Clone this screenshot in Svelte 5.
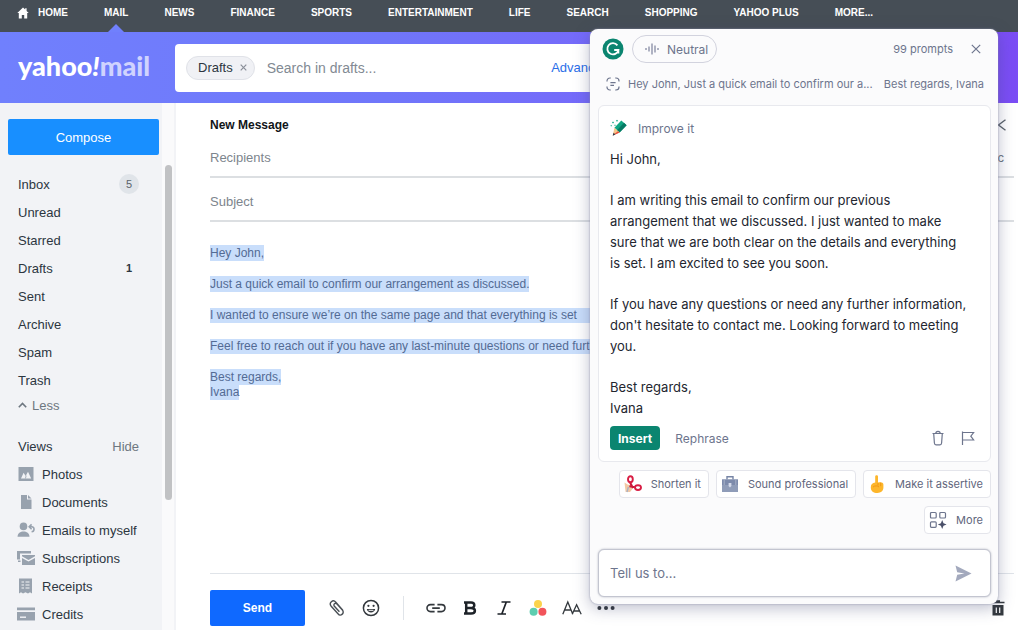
<script lang="ts">
  type Folder = { name: string; count?: number; badge?: boolean };

  const sections = ['NEWS', 'FINANCE', 'SPORTS', 'ENTERTAINMENT', 'LIFE', 'SEARCH', 'SHOPPING', 'YAHOO PLUS', 'MORE...'];

  const folders: Folder[] = [
    { name: 'Inbox', count: 5, badge: true },
    { name: 'Unread' },
    { name: 'Starred' },
    { name: 'Drafts', count: 1 },
    { name: 'Sent' },
    { name: 'Archive' },
    { name: 'Spam' },
    { name: 'Trash' }
  ];

  const views = ['Photos', 'Documents', 'Emails to myself', 'Subscriptions', 'Receipts', 'Credits'];

  let search = $state('');
  let recipients = $state('');
  let subject = $state('');
  let prompt = $state('');
</script>

<div class="app">
  <nav class="topnav">
    <a class="home" href="#home">
      <svg width="12" height="12" viewBox="0 0 12 12"><path d="M6 0.5 L0.3 6 H1.8 V11.5 H4.8 V8 H7.2 V11.5 H10.2 V6 H11.7 L9.6 4 V1.2 H8.2 V2.6 Z" fill="#fff" /></svg>
      HOME
    </a>
    <a class="current" href="#mail">MAIL</a>
    {#each sections as section}
      <a href="#{section}">{section}</a>
    {/each}
  </nav>

  <header class="header">
    <a class="logo" href="#mail">yahoo<i>!</i><span>mail</span></a>
    <div class="search">
      <button class="tag">Drafts
        <svg width="7" height="7" viewBox="0 0 7 7"><path d="M0.7 0.7 L6.3 6.3 M6.3 0.7 L0.7 6.3" stroke="#8a8f99" stroke-width="1.2" /></svg>
      </button>
      <input type="text" placeholder="Search in drafts..." aria-label="Search in drafts" bind:value={search} />
      <a href="#advanced">Advanced</a>
    </div>
  </header>

  <div class="content">
    <aside class="sidebar">
      <div class="side-list">
        <button class="compose-btn">Compose</button>
        <ul class="folders">
          {#each folders as folder}
            <li>
              <a href="#{folder.name}">{folder.name}</a>
              {#if folder.count}
                <span class="count" class:badge={folder.badge}>{folder.count}</span>
              {/if}
            </li>
          {/each}
        </ul>
        <button class="less">
          <svg width="9" height="6" viewBox="0 0 9 6"><path d="M0.8 5.2 L4.5 1.4 L8.2 5.2" fill="none" stroke="#6e7780" stroke-width="1.6" /></svg>
          Less
        </button>
        <div class="views-head"><span>Views</span><button>Hide</button></div>
        <ul class="views">
          {#each views as view}
            <li>
              <svg width="18" height="16" viewBox="0 0 18 16" fill="#98a2ae">
                {#if view === 'Photos'}
                  <path d="M1.5 1 H16.5 V15 H1.5 Z" />
                  <path d="M4 12.5 L6.6 6.8 L8.6 10 L11 5.8 L14.2 12.5 Z" fill="#f2f3f6" />
                  <path d="M8.4 12.5 L9.2 9.6" stroke="#98a2ae" stroke-width="0.8" />
                {:else if view === 'Documents'}
                  <path d="M4 1 H10 V5.5 H14.5 V15 H4 Z" />
                  <path d="M11 1 L14.5 4.5 H11 Z" />
                {:else if view === 'Emails to myself'}
                  <circle cx="6.5" cy="4.4" r="3.8" />
                  <path d="M0.5 14.8 C0.5 7.6 12.5 7.6 12.5 14.8 Z" />
                  <path d="M12.6 4.8 H14.8 C17.8 4.8 17.8 9.4 14.6 9.8 M14.6 2.4 L12.2 4.8 L14.6 7.2" fill="none" stroke="#98a2ae" stroke-width="1.6" />
                {:else if view === 'Subscriptions'}
                  <path d="M0 1 H14 V3.5 H3 V9.5 H0 Z M1 10.5 H3.5 V12 H1 Z" />
                  <path d="M5 5 H18 V6.3 L11.5 10 L5 6.3 Z M5 8 L11.5 11.6 L18 8 V15 H5 Z" />
                {:else if view === 'Receipts'}
                  <path d="M2 0.5 H15 V15.5 L13 14.3 L11 15.5 L8.5 14.3 L6 15.5 L4 14.3 L2 15.5 Z" />
                  <path d="M4.5 4 H7 M8.5 4 H12.5 M4.5 7 H7 M8.5 7 H12.5 M4.5 10 H7 M8.5 10 H12.5" stroke="#f2f3f6" stroke-width="1.2" />
                {:else}
                  <path d="M0 1.5 H18 V4.2 H0 Z M0 6 H18 V14.5 H0 Z" />
                  <path d="M3 11.2 H9" stroke="#f2f3f6" stroke-width="1.4" />
                {/if}
              </svg>
              <a href="#{view}">{view}</a>
            </li>
          {/each}
        </ul>
      </div>
      <div class="track"><div class="thumb"></div></div>
    </aside>

    <main class="compose">
      <div class="title-row">
        <h1>New Message</h1>
        <button aria-label="Collapse">
          <svg width="10" height="12" viewBox="0 0 10 12"><path d="M8.5 0.8 L1.5 6 L8.5 11.2" fill="none" stroke="#5b636a" stroke-width="1.4" /></svg>
        </button>
      </div>
      <div class="field">
        <input type="text" placeholder="Recipients" aria-label="Recipients" bind:value={recipients} />
        <a href="#bcc">CC/Bcc</a>
      </div>
      <div class="field">
        <input type="text" placeholder="Subject" aria-label="Subject" bind:value={subject} />
      </div>
      <div class="letter">
        <p><mark>Hey John,</mark></p>
        <p><mark>Just a quick email to confirm our arrangement as discussed.</mark></p>
        <p><mark class="long">I wanted to ensure we’re on the same page and that everything is set</mark></p>
        <p><mark class="long">Feel free to reach out if you have any last-minute questions or need further info</mark></p>
        <p><mark>Best regards,</mark><br /><mark>Ivana</mark></p>
      </div>
      <footer class="toolbar">
        <button class="send-btn">Send</button>
        <button class="tool" aria-label="Attach">
          <svg width="18" height="18" viewBox="0 0 18 18"><path d="M14.8 11.2 L7.8 3.2 C6.6 1.8 4.7 1.6 3.4 2.7 C2.1 3.9 2 5.8 3.2 7.2 L10.2 15 C11.2 16.2 12.8 16.4 14 15.4 C15.4 14.3 15.6 12.5 14.4 11 L9 5 C8.3 4.2 7.2 4.1 6.5 4.7 C5.7 5.4 5.7 6.4 6.4 7.2 L11.4 12.8" fill="none" stroke="#4a5056" stroke-width="1.4" /></svg>
        </button>
        <button class="tool" aria-label="Emoji">
          <svg width="18" height="18" viewBox="0 0 18 18"><circle cx="9" cy="9" r="7.6" fill="none" stroke="#33383d" stroke-width="1.5" /><circle cx="6.4" cy="6.8" r="1.1" fill="#33383d" /><circle cx="11.6" cy="6.8" r="1.1" fill="#33383d" /><path d="M4.8 10 H13.2 C12.6 14.6 5.4 14.6 4.8 10 Z" fill="#33383d" /><path d="M6.6 11.3 H11.4" stroke="#fff" /></svg>
        </button>
        <span class="divider"></span>
        <button class="tool" aria-label="Link">
          <svg width="20" height="18" viewBox="0 0 20 18"><path d="M8.6 12.6 H4.6 C-0.2 12.6 -0.2 5.6 4.6 5.6 H8.6 M11.4 5.6 H15.4 C20.2 5.6 20.2 12.6 15.4 12.6 H11.4 M6.2 9.1 H13.8" fill="none" stroke="#33383d" stroke-width="1.6" /></svg>
        </button>
        <button class="tool" aria-label="Bold">
          <svg width="18" height="18" viewBox="0 0 18 18"><path d="M3 3.6 H10 C14.4 3.6 14.4 9 10 9 H5.4 M10 9 C15.2 9 15.2 14.6 10 14.6 H3 M5.2 3.6 V14.6" fill="none" stroke="#1d2228" stroke-width="2.5" /></svg>
        </button>
        <button class="tool" aria-label="Italic">
          <svg width="18" height="18" viewBox="0 0 18 18"><path d="M6.5 3 H15.5 M2.5 15 H11 M11.3 3 L6.8 15" fill="none" stroke="#1d2228" stroke-width="1.7" /></svg>
        </button>
        <button class="tool" aria-label="Colors">
          <svg width="18" height="18" viewBox="0 0 18 18"><circle cx="9" cy="5" r="4" fill="#fbd34d" /><circle cx="4.6" cy="12.8" r="4" fill="#5dcdb0" /><circle cx="13.4" cy="12.8" r="4" fill="#f2545b" /></svg>
        </button>
        <button class="tool" aria-label="Text size">
          <svg width="20" height="18" viewBox="0 0 20 18"><path d="M0.8 15.2 L5.8 3 L10.8 15.2 M2.6 11 H9 M10.2 15.2 L14.6 5.8 L19.2 15.2 M11.8 12 H17.4" fill="none" stroke="#33383d" stroke-width="1.3" /></svg>
        </button>
        <button class="tool" aria-label="More tools">
          <svg width="18" height="18" viewBox="0 0 18 18" fill="#33383d"><circle cx="2.4" cy="9" r="2" /><circle cx="9" cy="9" r="2" /><circle cx="15.6" cy="9" r="2" /></svg>
        </button>
        <button class="discard" aria-label="Discard draft">
          <svg width="14" height="16" viewBox="0 0 14 16"><path d="M0.5 2.5 H13.5 M5 1 H9" stroke="#33383d" stroke-width="1.6" /><path d="M1.5 5 H12.5 V15.5 H1.5 Z" fill="#33383d" /><path d="M5.3 7.5 V13 M8.7 7.5 V13" stroke="#fff" stroke-width="1.2" /></svg>
        </button>
      </footer>
    </main>
  </div>

  <section class="assistant">
    <div class="assistant-head">
      <svg width="22" height="22" viewBox="0 0 22 22"><circle cx="11" cy="11" r="10.5" fill="#0b8570" /><path d="M15.4 7.4 A5.6 5.6 0 1 0 16.4 12 H12.2 M16.4 12 V15.6" fill="none" stroke="#fff" stroke-width="1.8" /></svg>
      <button class="tone">
        <svg width="14" height="12" viewBox="0 0 14 12"><path d="M1 5 V7 M4 3.5 V8.5 M7 0.5 V11.5 M10 2.5 V9.5 M13 5 V7" stroke="#7c829c" stroke-width="1.2" /></svg>
        Neutral
      </button>
      <span class="quota">99 prompts</span>
      <button aria-label="Close">
        <svg width="10" height="10" viewBox="0 0 10 10"><path d="M0.8 0.8 L9.2 9.2 M9.2 0.8 L0.8 9.2" stroke="#6d758d" stroke-width="1.2" /></svg>
      </button>
    </div>

    <div class="context">
      <svg width="14" height="14" viewBox="0 0 14 14"><path d="M1 4.6 V4 C1 2.2 2.2 1 4 1 H4.8 M9.2 1 H10 C11.8 1 13 2.2 13 4 V4.6 M13 9.4 V10 C13 11.8 11.8 13 10 13 H9.2 M4.8 13 H4 C2.2 13 1 11.8 1 10 V9.4 M4.4 5.6 H9.6 M4.4 8.4 H8" fill="none" stroke="#6d758d" stroke-width="1.2" /></svg>
      <span class="excerpt">Hey John, Just a quick email to confirm our a...</span>
      <span>Best regards, Ivana</span>
    </div>

    <article class="card">
      <div class="card-head">
        <svg width="18" height="18" viewBox="0 0 18 18">
          <path d="M11.3 1.6 L16.6 6.2 L9.6 13.6 L4.4 8.8 Z" fill="#11a683" />
          <path d="M14 3.8 L16.6 6.2 L9.6 13.6 L7 11.2 Z" fill="#077a64" />
          <path d="M4.4 8.8 L9.6 13.6 L2.8 16.4 Z" fill="#f5c78c" />
          <path d="M3.6 13.8 L5.4 15.4 L2.6 16.8 Z" fill="#303648" />
          <path d="M8 12.2 L9.6 13.6 L5.4 15.4 L4.6 14.7 Z" fill="#e8503c" />
          <path d="M2 3.6 L3 2.6 L4 3.6 L3 4.6 Z M6 1.8 L7 0.8 L8 1.8 L7 2.8 Z M4.2 6.2 L5 5.4 L5.8 6.2 L5 7 Z M0.4 6.8 L1.2 6 L2 6.8 L1.2 7.6 Z" fill="#11a683" />
        </svg>
        Improve it
      </div>
      <div class="reply">
        <p>Hi John,</p>
        <p>I am writing this email to confirm our previous arrangement that we discussed. I just wanted to make sure that we are both clear on the details and everything is set. I am excited to see you soon.</p>
        <p>If you have any questions or need any further information, don't hesitate to contact me. Looking forward to meeting you.</p>
        <p>Best regards,<br />Ivana</p>
      </div>
      <div class="card-actions">
        <button class="insert-btn">Insert</button>
        <button class="plain">Rephrase</button>
        <button class="icon-btn first" aria-label="Delete">
          <svg width="14" height="16" viewBox="0 0 14 16"><path d="M1.5 3.5 H12.5 M4.8 3.5 C4.8 0.6 9.2 0.6 9.2 3.5 M2.7 3.5 L3.4 13 C3.5 14.2 4 14.8 5 14.8 H9 C10 14.8 10.5 14.2 10.6 13 L11.3 3.5" fill="none" stroke="#6d758d" stroke-width="1.2" /></svg>
        </button>
        <button class="icon-btn" aria-label="Report">
          <svg width="14" height="16" viewBox="0 0 14 16"><path d="M1.5 1.5 V15 M1.5 2.5 H12.6 L9.8 6.2 L12.6 10 H1.5" fill="none" stroke="#6d758d" stroke-width="1.2" /></svg>
        </button>
      </div>
    </article>

    <div class="suggestions">
      <button class="chip">
        <svg width="18" height="18" viewBox="0 0 18 18">
          <path d="M0.5 7.5 L3.6 9.4 L6.4 10.2 L8.8 13.6 L6 17 H1.6 Z" fill="#f3c9a4" />
          <path d="M5.8 7 L9 13 M11 12.2 L5.4 11.2" stroke="#c9183a" stroke-width="2" />
          <ellipse cx="6.4" cy="4.2" rx="2.4" ry="3" fill="none" stroke="#d81e44" stroke-width="1.9" />
          <ellipse cx="14" cy="12.6" rx="3" ry="2.4" fill="none" stroke="#d81e44" stroke-width="1.9" />
          <path d="M4.4 12 L3 17" stroke="#a9b2c4" stroke-width="1.4" />
        </svg>
        Shorten it
      </button>
      <button class="chip">
        <svg width="18" height="18" viewBox="0 0 18 18">
          <path d="M6 4.5 V1.7 H12 V4.5" fill="none" stroke="#7684a5" stroke-width="1.4" />
          <path d="M1 4.5 H17 V17 H1 Z" fill="#8f9cb8" />
          <path d="M1 4.5 H17 V10 H1 Z" fill="#7c8aab" />
          <path d="M3.2 4.5 V10 M14.8 4.5 V10" stroke="#a7b1c8" stroke-width="1" />
          <path d="M7.6 8 H10.4 V11 L9 12.6 L7.6 11 Z" fill="#d4daea" />
        </svg>
        Sound professional
      </button>
      <button class="chip">
        <svg width="18" height="18" viewBox="0 0 18 18">
          <path d="M7.2 1.6 C7.2 -0.2 10 -0.2 10 1.6 V7.4 C13 6.8 15.4 7.4 15.4 9.6 V12.6 C15.4 16 13 18 9.4 18 C5.4 18 2.8 16 2.8 12.4 C2.8 9.4 4.4 8 7.2 7.6 Z" fill="#fdb62b" />
          <path d="M5 12 C7 10.4 9.6 10.6 11 12 M10 8 V10.6 M12.7 7.6 V11.2" fill="none" stroke="#ee9413" stroke-width="0.9" />
        </svg>
        Make it assertive
      </button>
      <button class="chip">
        <svg width="18" height="18" viewBox="0 0 18 18"><path d="M3 1.5 H6.2 Q7.2 1.5 7.2 2.5 V6 Q7.2 7 6.2 7 H2.5 Q1.5 7 1.5 6 V2.5 Q1.5 1.5 2.5 1.5 Z M11.8 1.5 H15.5 Q16.5 1.5 16.5 2.5 V6 Q16.5 7 15.5 7 H11.8 Q10.8 7 10.8 6 V2.5 Q10.8 1.5 11.8 1.5 Z M2.5 10.8 H6.2 Q7.2 10.8 7.2 11.8 V15.3 Q7.2 16.3 6.2 16.3 H2.5 Q1.5 16.3 1.5 15.3 V11.8 Q1.5 10.8 2.5 10.8 Z" fill="none" stroke="#6d758d" stroke-width="1.2" /><path d="M13.2 9 L14.5 12.2 L17.6 13.5 L14.5 14.8 L13.2 18 L11.9 14.8 L8.8 13.5 L11.9 12.2 Z" fill="#4a5069" /></svg>
        More
      </button>
    </div>

    <form class="prompt">
      <input type="text" placeholder="Tell us to..." aria-label="Tell us to" bind:value={prompt} />
      <button type="button" aria-label="Submit">
        <svg width="17" height="17" viewBox="0 0 17 17"><path d="M0.5 0.5 L16.5 8.5 L0.5 16.5 L2.2 9.8 L9.5 8.5 L2.2 7.2 Z" fill="#a3a9bd" /></svg>
      </button>
    </form>
  </section>
</div>

<style>
  :global(body) {
    margin: 0;
  }

  .app {
    position: relative;
    display: flex;
    flex-direction: column;
    height: 100vh;
    overflow: hidden;
    background: #fff;
    color: #2c363f;
    font-family: 'Liberation Sans', Arial, sans-serif;
    font-size: 13px;
  }

  button,
  input {
    padding: 0;
    border: none;
    background: none;
    color: inherit;
    font: inherit;
  }

  button {
    cursor: pointer;
  }

  input {
    flex: 1;
    min-width: 0;
    outline: none;
  }

  a {
    color: inherit;
    text-decoration: none;
  }

  svg {
    display: block;
    flex: none;
  }

  ul {
    margin: 0;
    padding: 0;
    list-style: none;
  }

  /* top navigation */
  .topnav {
    display: flex;
    flex: none;
    gap: 36px;
    height: 32px;
    padding-left: 17px;
    background: #464e56;
    color: #fff;
    font-size: 10px;
    font-weight: 700;
    line-height: 26px;
    white-space: nowrap;
  }

  .home {
    display: flex;
    align-items: center;
    gap: 9px;
    height: 26px;
  }

  .current {
    position: relative;
  }

  .current::after {
    content: '';
    position: absolute;
    left: 50%;
    bottom: 0;
    margin-left: -8px;
    border: 8px solid transparent;
    border-top: none;
    border-bottom-color: #7080fd;
  }

  /* header */
  .header {
    display: flex;
    flex: none;
    align-items: center;
    height: 71px;
    background: linear-gradient(90deg, #7080fd 0%, #7076fa 38%, #756afa 58%, #7b4df5 100%);
  }

  .logo {
    flex: none;
    width: 157px;
    padding: 0 0 4px 18px;
    color: #fff;
    font-family: Lato, sans-serif;
    font-size: 27px;
    font-weight: 900;
    line-height: 30px;
    white-space: nowrap;
  }

  .logo span {
    color: #d0d3fe;
  }

  .search {
    display: flex;
    align-items: center;
    flex: 0 1 450px;
    box-sizing: border-box;
    height: 48px;
    padding: 0 16px 0 11px;
    border-radius: 4px;
    background: #fff;
  }

  .tag {
    display: flex;
    align-items: center;
    gap: 7px;
    height: 24px;
    margin-right: 12px;
    padding: 0 7px 0 11px;
    border: 1px solid #e0e2e8;
    border-radius: 12px;
    box-sizing: border-box;
    background: #f0f1f5;
  }

  .search input {
    font-size: 14px;
  }

  .search input::placeholder {
    color: #828a93;
    opacity: 1;
  }

  .search a {
    color: #2a6ee8;
  }

  /* sidebar */
  .content {
    display: flex;
    flex: 1;
    min-height: 0;
  }

  .sidebar {
    display: flex;
    flex: none;
    width: 176px;
    background: #f2f3f6;
  }

  .side-list {
    flex: 1;
    padding: 16px 3px 0 8px;
    overflow: hidden;
  }

  .compose-btn {
    display: block;
    width: 100%;
    height: 36px;
    margin-bottom: 15px;
    border-radius: 2px;
    background: #188fff;
    color: #fff;
  }

  .folders,
  .views,
  .less,
  .views-head {
    padding: 0 20px 0 10px;
  }

  .folders li,
  .views li,
  .views-head {
    display: flex;
    align-items: center;
    height: 28px;
    white-space: nowrap;
  }

  .folders li,
  .views-head {
    justify-content: space-between;
  }

  .count {
    width: 20px;
    font-size: 11px;
    font-weight: 700;
    line-height: 20px;
    text-align: center;
  }

  .badge {
    border-radius: 50%;
    background: #e0e4e9;
    color: #5b636a;
    font-weight: 400;
  }

  .less {
    display: flex;
    align-items: center;
    gap: 5px;
    height: 22px;
    margin-bottom: 16px;
    color: #6e7780;
  }

  .views-head button {
    color: #6e7780;
  }

  .views li {
    gap: 7px;
  }

  .views svg {
    margin-left: -1px;
  }

  .track {
    width: 14px;
    padding-top: 62px;
    background: #fafafb;
    box-sizing: border-box;
    border-right: 2px solid #f2f3f6;
  }

  .thumb {
    width: 7px;
    height: 72%;
    margin: 0 auto;
    border-radius: 4px;
    background: #c1c2c4;
  }

  /* compose pane */
  .compose {
    display: flex;
    flex: 1;
    flex-direction: column;
    min-width: 0;
    padding: 13px 4px 0 34px;
  }

  .title-row {
    display: flex;
    flex: none;
    align-items: center;
    justify-content: space-between;
    height: 18px;
    padding-right: 7px;
  }

  h1 {
    margin: 0;
    color: #101418;
    font-size: 12px;
    font-weight: 700;
  }

  .field {
    display: flex;
    flex: none;
    align-items: center;
    box-sizing: border-box;
    height: 44px;
    padding-top: 5px;
    border-bottom: 2px solid #dcdfe2;
    color: #6e7780;
  }

  .field a {
    padding-right: 10px;
  }

  .field input::placeholder {
    color: #7d858d;
    opacity: 1;
  }

  .letter {
    flex: 1;
    padding: 24px 120px 0 0;
    font-size: 12px;
    line-height: 15px;
    white-space: nowrap;
  }

  .letter p {
    margin: 0 0 16px;
  }

  mark {
    padding: 1px 0;
    background: #c9defb;
    color: #536b94;
  }

  .long {
    display: block;
    padding: 0;
  }

  .toolbar {
    display: flex;
    flex: none;
    align-items: center;
    height: 57px;
    box-sizing: border-box;
    padding-top: 12px;
    border-top: 1px solid #e0e4e9;
  }

  .send-btn {
    width: 95px;
    height: 36px;
    margin-right: 15px;
    border-radius: 2px;
    background: #0f69ff;
    color: #fff;
    font-size: 12px;
    font-weight: 700;
  }

  .tool {
    display: flex;
    align-items: center;
    justify-content: center;
    width: 34px;
    height: 34px;
  }

  .divider {
    width: 1px;
    height: 24px;
    margin: 0 15px;
    background: #e0e4e9;
  }

  .discard {
    margin-left: auto;
    padding-right: 9px;
  }

  /* assistant panel floating over the mail */
  .assistant {
    position: absolute;
    top: 29px;
    right: 20px;
    width: 408px;
    box-sizing: border-box;
    padding: 6px 7px 7px 8px;
    border-radius: 8px;
    background: #fbfbfc;
    box-shadow: 0 0 2px #8c90a8, 0 4px 16px rgba(60, 65, 110, 0.35);
    color: #6d758d;
    font-family: Inter, sans-serif;
    font-size: 12px;
  }

  .assistant-head {
    display: flex;
    align-items: center;
    padding: 0 10px 0 4px;
  }

  .tone {
    display: flex;
    align-items: center;
    gap: 8px;
    height: 28px;
    margin-left: 8px;
    padding: 0 8px 0 12px;
    border: 1px solid #d2d3de;
    border-radius: 14px;
    box-sizing: border-box;
  }

  .quota {
    margin-left: auto;
    margin-right: 18px;
    font-size: 11px;
  }

  .context {
    display: flex;
    align-items: center;
    height: 42px;
    padding: 0 7px 0 8px;
    font-size: 11px;
    white-space: nowrap;
  }

  .excerpt {
    margin: 0 auto 0 8px;
  }

  .card {
    padding: 11px;
    border: 1px solid #e8e9ee;
    border-radius: 6px;
    background: #fff;
  }

  .card-head {
    display: flex;
    align-items: center;
    gap: 10px;
    height: 22px;
    margin-bottom: 10px;
  }

  .reply {
    padding-right: 11px;
    color: #23262f;
    font-size: 13px;
    line-height: 21px;
  }

  .reply p {
    margin: 0 0 20px;
  }

  .reply p:last-child {
    margin: 0;
  }

  .card-actions {
    display: flex;
    align-items: center;
    margin-top: 7px;
  }

  .insert-btn {
    height: 24px;
    padding: 0 8px;
    border-radius: 4px;
    background: #0b8570;
    color: #fff;
    font-weight: 700;
  }

  .plain {
    margin-left: 15px;
  }

  .icon-btn {
    margin-right: 16px;
  }

  .icon-btn.first {
    margin-left: auto;
  }

  .card-actions .icon-btn:last-child {
    margin-right: 4px;
  }

  .suggestions {
    display: flex;
    flex-wrap: wrap;
    justify-content: flex-end;
    gap: 8px 7px;
    margin: 8px 0 15px;
  }

  .chip {
    display: flex;
    align-items: center;
    gap: 9px;
    height: 28px;
    padding: 0 7px 0 4px;
    border: 1px solid #e4e5eb;
    border-radius: 4px;
    box-sizing: border-box;
    background: #fff;
    color: #5f667c;
    font-size: 11px;
    white-space: nowrap;
  }

  .prompt {
    display: flex;
    align-items: center;
    height: 46px;
    padding: 0 18px 0 11px;
    border: 1px solid #c3c5d0;
    border-radius: 6px;
    background: #fff;
    box-shadow: 0 0 2px rgba(100, 105, 130, 0.5);
    font-size: 13px;
  }

  .prompt input::placeholder {
    color: #6d758d;
    opacity: 1;
  }
</style>
